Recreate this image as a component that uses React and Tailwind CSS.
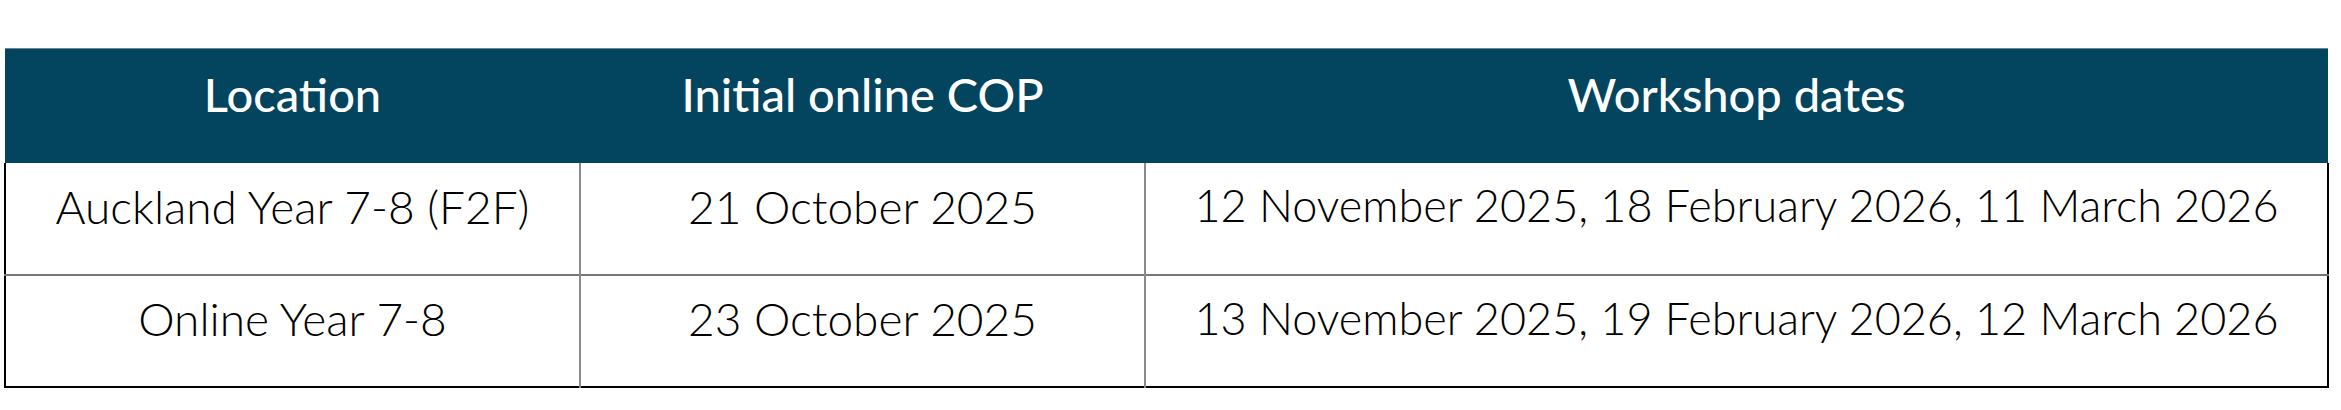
const rows = [
  { location: 'Auckland Year 7-8 (F2F)', cop: '21 October 2025', dates: '12 November 2025, 18 February 2026, 11 March 2026' },
  { location: 'Online Year 7-8', cop: '23 October 2025', dates: '13 November 2025, 19 February 2026, 12 March 2026' },
];

export default function App() {
  return (
    <div className="h-[410px] w-full bg-white pl-[4px] pr-[12px] pt-[48px]" style={{ fontFamily: 'Lato, "Noto Sans", sans-serif' }}>
      <table className="w-full table-fixed border-collapse">
        <colgroup>
          <col className="w-[575px]" />
          <col className="w-[565px]" />
          <col />
        </colgroup>
        <thead>
          <tr className="h-[114px] border-t border-[#6b8796] bg-[#03445f] text-white">
            {['Location', 'Initial online COP', 'Workshop dates'].map((h) => (
              <th key={h} className="pb-[24px] text-center align-middle text-[47px] font-medium">{h}</th>
            ))}
          </tr>
        </thead>
        <tbody className="border-x-2 border-b-2 border-black">
          {rows.map((r) => (
            <tr key={r.location} className="h-[112px] border-b-2 border-[#767676] last:border-black">
              <td className="border-r-2 border-[#8a8a8a] pb-[24px] text-center align-middle text-[46px] font-light text-black">{r.location}</td>
              <td className="border-r-2 border-[#8a8a8a] pb-[24px] text-center align-middle text-[46px] font-light text-black">{r.cop}</td>
              <td className="pb-[24px] text-center align-middle text-[45px] font-light text-black">{r.dates}</td>
            </tr>
          ))}
        </tbody>
      </table>
    </div>
  );
}
